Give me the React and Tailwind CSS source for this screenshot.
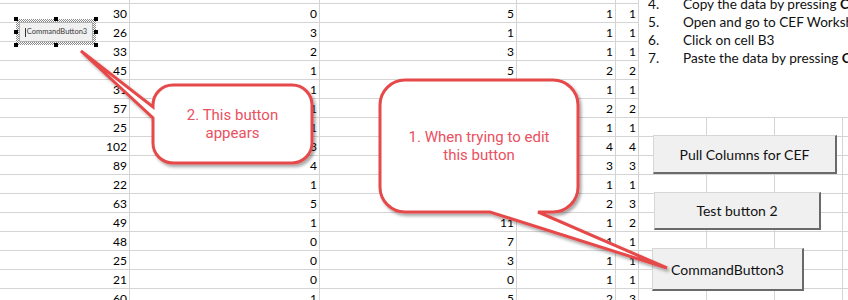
import React from "react";

const rows = [
  ["", "", "", "", ""],
  [30, 0, 5, 1, 1],
  [26, 3, 1, 1, 1],
  [33, 2, 3, 1, 1],
  [45, 1, 5, 2, 2],
  [31, 1, 4, 1, 1],
  [57, 1, 2, 2, 2],
  [25, 1, 1, 1, 1],
  [102, 3, 6, 4, 4],
  [89, 4, 2, 3, 3],
  [22, 1, 1, 1, 1],
  [63, 5, 8, 2, 3],
  [49, 1, 11, 1, 2],
  [48, 0, 7, 1, 1],
  [25, 0, 3, 1, 1],
  [21, 0, 0, 1, 1],
  [60, 1, 5, 2, 3],
];

const numCols = ["w-[130px]", "w-[190px]", "w-[197px]", "w-[99px]", "w-[23px]"];
const emptyCols = ["w-[68px]", "w-[68px]", "w-[68px]"];

function Row({ vals }) {
  return (
    <div className="flex h-[19px] shrink-0">
      {vals.map((v, i) => (
        <div
          key={i}
          className={`${numCols[i]} shrink-0 border-r border-b border-[#d4d4d4] text-right pr-[2px] pt-[1px] leading-[17px] text-[12px] text-black`}
        >
          {v}
        </div>
      ))}
      {emptyCols.map((c, i) => (
        <div key={"e" + i} className={`${c} shrink-0 border-r border-b border-[#d4d4d4]`} />
      ))}
      <div className="flex-1 border-b border-[#d4d4d4]" />
    </div>
  );
}

function HandleRow({ middle = true }) {
  return (
    <div className="flex justify-between">
      <span className="w-[4px] h-[4px] bg-black" />
      {middle ? <span className="w-[4px] h-[4px] bg-black" /> : null}
      <span className="w-[4px] h-[4px] bg-black" />
    </div>
  );
}

function XlButton({ className, children }) {
  return (
    <div
      className={`absolute flex items-center justify-center bg-[#f0f0f0] border-t border-l border-[#d6d6d6] border-r-2 border-b-2 border-r-[#6a6a6a] border-b-[#6a6a6a] text-[14px] text-[#111] ${className}`}
    >
      {children}
    </div>
  );
}

export default function App() {
  return (
    <div
      className="relative w-[848px] h-[300px] overflow-hidden bg-white"
      style={{ fontFamily: "Lato, 'Open Sans', sans-serif" }}
    >
      {/* grid */}
      <div className="flex flex-col -mt-[15px]">
        {rows.map((r, i) => (
          <Row key={i} vals={r} />
        ))}
      </div>

      {/* instructions text box */}
      <div className="absolute left-[639px] top-0 w-[209px] h-[117px] bg-white overflow-hidden text-[13.6px] text-[#111]">
        <div className="-mt-[5px] flex flex-col">
          {[
            ["4.", <>Copy the data by pressing <b>Ctrl+C</b></>],
            ["5.", <>Open and go to CEF Worksheet</>],
            ["6.", <>Click on cell B3</>],
            ["7.", <>Paste the data by pressing <b>Ctrl+V</b></>],
          ].map(([n, t], i) => (
            <div key={i} className="flex h-[18px] leading-[18px] whitespace-nowrap">
              <span className="w-[44px] pl-[9px] shrink-0">{n}</span>
              <span>{t}</span>
            </div>
          ))}
        </div>
      </div>

      {/* selected small button (design mode) */}
      <div className="absolute left-[14px] top-[17px] w-[84px] h-[30px]">
        <div className="absolute inset-[2px] p-[3px] bg-[repeating-conic-gradient(#8a8a8a_0_25%,#ffffff_0_50%)] bg-[length:2px_2px]">
          <div className="relative w-full h-full bg-[#f0f0f0] border border-[#b0b0b0] flex items-center justify-center gap-[1px] text-[7.5px] text-[#3a3a3a]">
            <span className="w-px h-[9px] bg-[#333]" />
            CommandButton3
          </div>
        </div>
        <div className="absolute inset-0 flex flex-col justify-between">
          <HandleRow />
          <HandleRow middle={false} />
          <HandleRow />
        </div>
      </div>

      {/* sheet buttons */}
      <XlButton className="left-[653px] top-[135px] w-[184px] h-[39px]">Pull Columns for CEF</XlButton>
      <XlButton className="left-[654px] top-[192px] w-[167px] h-[38px]">Test button 2</XlButton>
      <XlButton className="left-[652px] top-[248px] w-[152px] h-[43px]">CommandButton3</XlButton>

      {/* callouts */}
      <svg className="absolute left-0 top-0" width="848" height="300" viewBox="0 0 848 300">
        <defs>
          <filter id="sh" x="-10%" y="-10%" width="130%" height="130%">
            <feDropShadow dx="2" dy="2.5" stdDeviation="1.5" floodColor="#000" floodOpacity="0.35" />
          </filter>
        </defs>
        <path
          d="M173,85 H292 A20,20 0 0 1 312,105 V143 A20,20 0 0 1 292,163 H173 A20,20 0 0 1 153,143 V118 L81,51 L153,107 V105 A20,20 0 0 1 173,85 Z"
          fill="#ffffff"
          stroke="#e64a4a"
          strokeWidth="3"
          strokeLinejoin="miter"
          filter="url(#sh)"
        />
        <path
          d="M405,80 H553 A25,25 0 0 1 578,105 V187 A25,25 0 0 1 553,212 H538 L667,268 L490,212 H405 A25,25 0 0 1 380,187 V105 A25,25 0 0 1 405,80 Z"
          fill="#ffffff"
          stroke="#e64a4a"
          strokeWidth="3"
          strokeLinejoin="miter"
          filter="url(#sh)"
        />
      </svg>

      <div
        className="absolute left-[153px] top-[85px] w-[159px] h-[78px] flex flex-col items-center justify-center text-[15px] leading-[18px] text-[#ea5060]"
        style={{ fontFamily: "Roboto, sans-serif" }}
      >
        <div>2. This button</div>
        <div>appears</div>
      </div>
      <div
        className="absolute left-[380px] top-[80px] w-[198px] h-[132px] flex flex-col items-center justify-center text-[15px] leading-[18px] text-[#ea5060]"
        style={{ fontFamily: "Roboto, sans-serif" }}
      >
        <div>1. When trying to edit</div>
        <div>this button</div>
      </div>
    </div>
  );
}
